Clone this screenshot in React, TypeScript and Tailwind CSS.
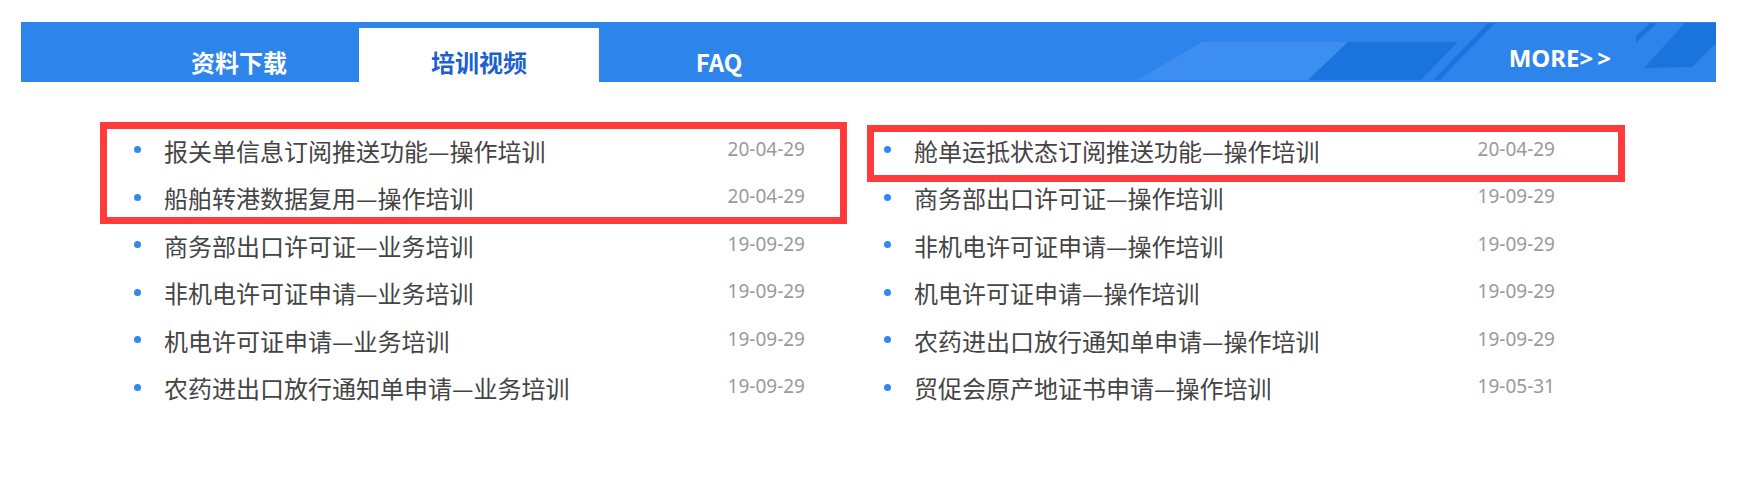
import React from 'react'

interface Item {
  title: string
  date: string
}

const leftItems: Item[] = [
  { title: '报关单信息订阅推送功能—操作培训', date: '20-04-29' },
  { title: '船舶转港数据复用—操作培训', date: '20-04-29' },
  { title: '商务部出口许可证—业务培训', date: '19-09-29' },
  { title: '非机电许可证申请—业务培训', date: '19-09-29' },
  { title: '机电许可证申请—业务培训', date: '19-09-29' },
  { title: '农药进出口放行通知单申请—业务培训', date: '19-09-29' },
]

const rightItems: Item[] = [
  { title: '舱单运抵状态订阅推送功能—操作培训', date: '20-04-29' },
  { title: '商务部出口许可证—操作培训', date: '19-09-29' },
  { title: '非机电许可证申请—操作培训', date: '19-09-29' },
  { title: '机电许可证申请—操作培训', date: '19-09-29' },
  { title: '农药进出口放行通知单申请—操作培训', date: '19-09-29' },
  { title: '贸促会原产地证书申请—操作培训', date: '19-05-31' },
]

const tabs = ['资料下载', '培训视频', 'FAQ']

const cjk = { fontFamily: '"Noto Sans CJK SC", "Noto Sans", sans-serif' }

function Column({ items }: { items: Item[] }) {
  return (
    <ul className="w-[671px] flex flex-col">
      {items.map((item, i) => (
        <li key={i} className="h-[47.5px] flex items-center">
          <span className="w-[7px] h-[7px] rounded-full bg-[#3486f2] shrink-0 -mt-[2px]" />
          <span className="ml-[23px] text-[24px] leading-none text-[#444]" style={cjk}>
            {item.title}
          </span>
          <span
            className="ml-auto text-[19px] leading-none text-[#9a9a9a] -mt-[3px]"
            style={{ fontFamily: '"Noto Sans", sans-serif' }}
          >
            {item.date}
          </span>
        </li>
      ))}
    </ul>
  )
}

export default function App() {
  const active = 1
  return (
    <div className="relative w-[1754px] h-[487px] bg-white pt-[22px] pl-[21px]">
      {/* Tab bar */}
      <div className="relative w-[1695px] h-[60px] bg-[#2d85ec] flex items-end pl-[98px] overflow-hidden">
        <svg className="absolute left-0 top-0" width="1695" height="60" viewBox="0 0 1695 60">
          <polygon points="1116,58 1181,20 1327,20 1287,58" fill="#3c8ef0" />
          <polygon points="1287,58 1327,20 1437,20 1400,58" fill="#1b74dd" />
          <polygon points="1412,58 1419,58 1474,1 1467,1" fill="#1b74dd" />
          <polygon points="1615,21 1615,14 1629,1 1636,1" fill="#1b74dd" />
          <polygon points="1664,1 1695,1 1695,21 1671,45 1623,46" fill="#1b74dd" />
        </svg>
        {tabs.map((t, i) => (
          <div
            key={t}
            className={`relative w-[240px] h-[54px] flex items-center justify-center pt-[14px] text-[24px] font-bold leading-none ${
              i === active ? 'bg-white text-[#1c5fd0]' : 'text-white'
            }`}
            style={cjk}
          >
            {t}
          </div>
        ))}
        <div
          className="relative ml-auto mr-[101px] self-center mt-[12px] text-[24px] font-bold leading-none text-white"
          style={{ fontFamily: '"Noto Sans", sans-serif' }}
        >
          MORE<span className="tracking-[4px]">&gt;&gt;</span>
        </div>
      </div>

      {/* Lists */}
      <div className="flex gap-[79px] pl-[113px] pt-[45px]">
        <Column items={leftItems} />
        <Column items={rightItems} />
      </div>

      {/* Highlight boxes */}
      <div className="absolute left-[100px] top-[122px] w-[747px] h-[102px] border-[7px] border-[#ff3b3b]" />
      <div className="absolute left-[867px] top-[125px] w-[758px] h-[57px] border-[7px] border-[#ff3b3b]" />
    </div>
  )
}
